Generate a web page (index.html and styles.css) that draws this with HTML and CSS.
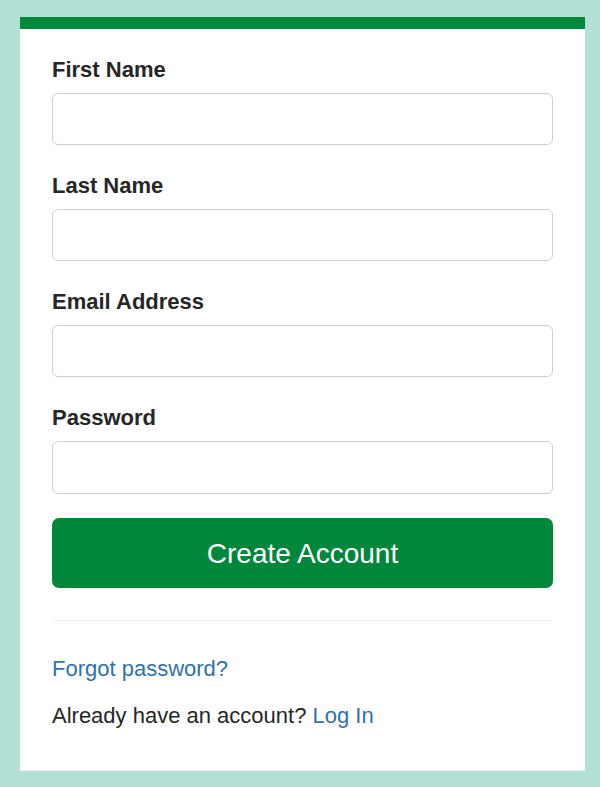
FILE: index.html
```html
<!DOCTYPE html>
<html lang="en">
<head>
<meta charset="utf-8">
<title>Create Account</title>
<link rel="stylesheet" href="styles.css">
</head>
<body>
  <main class="card">
    <form class="form">
      <div class="field">
        <label class="label" for="first">First Name</label>
        <input class="input" id="first" type="text">
      </div>
      <div class="field">
        <label class="label" for="last">Last Name</label>
        <input class="input" id="last" type="text">
      </div>
      <div class="field">
        <label class="label" for="email">Email Address</label>
        <input class="input" id="email" type="email">
      </div>
      <div class="field">
        <label class="label" for="pw">Password</label>
        <input class="input" id="pw" type="password">
      </div>
      <button class="btn" type="button">Create Account</button>
    </form>
    <hr class="divider">
    <p class="line"><a class="link" href="#">Forgot password?</a></p>
    <p class="line line-2">Already have an account? <a class="link" href="#">Log In</a></p>
  </main>
</body>
</html>
```

FILE: styles.css
```css
* { box-sizing: border-box; }
html, body { margin: 0; padding: 0; }
body {
  background: #b3e0d5;
  font-family: "Liberation Sans", Arial, sans-serif;
  color: #262626;
  padding: 17px 15px 16px 20px;
}
.card {
  background: #fff;
  border-top: 12px solid #00873c;
  border-bottom: 1px solid #e8f2ef;
  padding: 25px 32px 39px 32px;
  width: 565px;
}
.form { display: flex; flex-direction: column; }
.field { display: flex; flex-direction: column; margin-bottom: 25px; }
.label {
  font-size: 22px;
  line-height: 31px;
  font-weight: bold;
  margin-bottom: 8px;
  color: #262626;
}
.input {
  height: 52px;
  width: 100%;
  border: 1px solid #cfcfcf;
  border-radius: 6px;
  background: #fff;
  font-size: 20px;
  padding: 0 12px;
}
.field:nth-child(4) .input { height: 53px; }
.field:nth-child(4) { margin-bottom: 24px; }
.btn {
  height: 70px;
  width: 100%;
  border: none;
  border-radius: 7px;
  background: #00873c;
  color: #fff;
  font-family: "Liberation Sans", Arial, sans-serif;
  font-size: 28px;
  padding: 2px 0 0 0;
  cursor: pointer;
}
.divider {
  border: none;
  border-top: 1px solid #f0f0f0;
  margin: 32px 0 32px 0;
}
.line {
  margin: 0;
  font-size: 22px;
  line-height: 31px;
}
.line-2 { margin-top: 16px; }
.link { color: #2f72ad; text-decoration: none; }
```
